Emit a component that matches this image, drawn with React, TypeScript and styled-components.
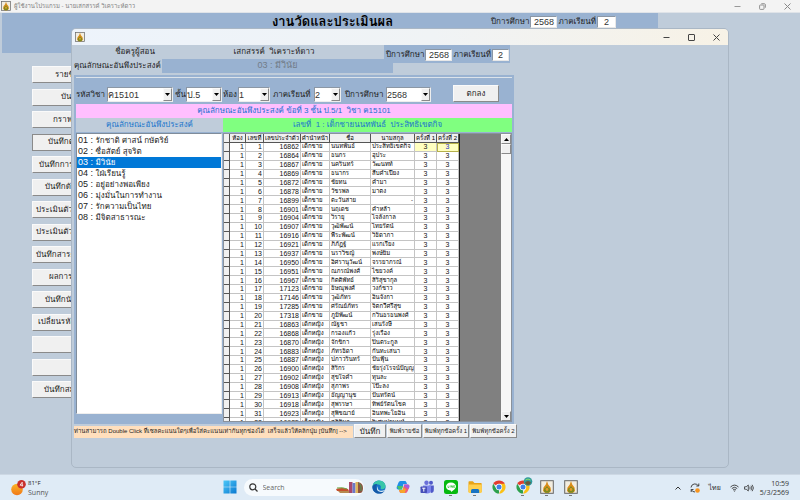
import React from "react";
import styled, { createGlobalStyle, css } from "styled-components";

const steel = "#99b2d1";
const mist = "#bfccda";
const face = "#f0f0f0";
const sans = '"Liberation Sans", Loma, Waree, Garuda, "Noto Sans Thai Looped", "Noto Sans Thai", "Noto Sans", sans-serif';

const GlobalStyle = createGlobalStyle`
  * { box-sizing: border-box; }
  html, body, #root { height: 100%; margin: 0; }
  body { font-family: ${sans}; font-size: 8px; color: #222; overflow: hidden; }
  button, input, select { font: inherit; color: inherit; border-radius: 0; margin: 0; }
`;

const Desktop = styled.div`
  height: 100%;
  display: flex;
  flex-direction: column;
`;

const MainWindow = styled.main`
  flex: 1;
  min-height: 0;
  position: relative;
  overflow: hidden;
  background: ${mist};
`;

const MainTitleBar = styled.header`
  display: flex;
  align-items: center;
  gap: 3px;
  height: 13px;
  padding: 0 9px 0 1px;
  background: #f3f3f3;
  border-bottom: 1px solid #dfe3e8;
  color: #808080;
  font-size: 6px;
  line-height: 12px;
`;

const WindowControls = styled.div<{ $gap: number }>`
  display: flex;
  align-items: center;
  gap: ${(p) => p.$gap}px;
  margin-left: auto;
`;

const ControlButton = styled.button`
  display: flex;
  padding: 0;
  border: 0;
  background: none;
`;

const Banner = styled.div`
  display: flex;
  align-items: flex-start;
  width: 82%;
  height: 40px;
  padding-right: 42px;
  margin-left: 2px;
  background: ${steel};
`;

const Heading = styled.h1`
  flex: 1;
  margin: 0;
  padding-left: 172px;
  text-align: center;
  color: #000;
  font-size: 13px;
  line-height: 18px;
  white-space: nowrap;
`;

const PeriodGroup = styled.div`
  display: flex;
  align-items: center;
  gap: 1px;
  padding-top: 2px;
`;

const FieldLabel = styled.label`
  white-space: nowrap;
  line-height: 14px;
`;

const SmallInput = styled.input<{ $w: number }>`
  width: ${(p) => p.$w}px;
  height: 12px;
  padding: 0;
  border: 1px solid #8b97a5;
  border-right-color: #e8e8e8;
  border-bottom-color: #e8e8e8;
  background: #fff;
  text-align: center;
  font-size: 9px;
  line-height: 10px;
  color: #333;
`;

const MenuColumn = styled.nav`
  display: flex;
  flex-direction: column;
  justify-content: space-between;
  width: 106px;
  height: 332px;
  margin: 13px 0 0 32px;
`;

const raised = css`
  border: 1px solid #fafafa;
  border-right-color: #8a8a8a;
  border-bottom-color: #8a8a8a;
  background: ${face};
`;

const MenuButton = styled.button<{ $indent: number; $active?: boolean }>`
  ${raised}
  height: 17px;
  padding: 0 0 0 ${(p) => p.$indent}px;
  text-align: left;
  line-height: 14px;
  white-space: nowrap;
  overflow: hidden;
  ${(p) => p.$active && "border-color: #8a8a8a;"}
`;

const Dialog = styled.section`
  position: absolute;
  inset: 28px 71px 6px;
  display: flex;
  flex-direction: column;
  overflow: hidden;
  border: 1px solid #aab7c5;
  border-radius: 5px;
  background: ${mist};
`;

const DialogTitleBar = styled.header`
  display: flex;
  align-items: center;
  flex: none;
  height: 16px;
  padding: 0 8px 0 3px;
  background: linear-gradient(90deg, #edf3fb 0%, #f0f3f5 55%, #f7f2e6 100%);
`;

const DialogBody = styled.div`
  display: flex;
  flex-direction: column;
  align-items: flex-start;
  padding-left: 2px;
`;

const InfoArea = styled.div`
  display: flex;
  align-items: flex-start;
  width: 436px;
  height: 30px;
`;

const InfoGrid = styled.dl`
  display: grid;
  grid-template-columns: 88px 222px;
  grid-template-rows: 14px 14px;
  margin: 0;
  text-align: center;
  white-space: nowrap;
  line-height: 13px;
`;

const Term = styled.dt<{ $inset?: number }>`
  padding-left: ${(p) => p.$inset ?? 0}px;
  text-align: ${(p) => (p.$inset ? "center" : "left")};
`;

const Detail = styled.dd<{ $filled?: boolean }>`
  margin: 0;
  padding-left: 2px;
  white-space: pre;
  ${(p) =>
    p.$filled &&
    css`
      padding-left: 0;
      margin-right: -9px;
      background: ${steel};
      color: #727c88;
      font-size: 9px;
    `}
`;

const PeriodPanel = styled.div`
  display: flex;
  align-items: center;
  justify-content: flex-end;
  gap: 1px;
  flex: 1;
  height: 18px;
  padding: 2px 1px 0 0;
  background: ${steel};
`;

const Frame = styled.div`
  width: 440px;
  padding: 0 2px;
  border-top: 2px solid ${steel};
  background: ${steel};
`;

const FilterBar = styled.form`
  display: flex;
  align-items: center;
  height: 27px;
  padding: 7px 0 0 0;
  border-top: 1px solid #dce3ea;
  line-height: 14px;
`;

const Filter = styled.label<{ $after: number }>`
  display: flex;
  align-items: center;
  gap: 1px;
  margin-right: ${(p) => p.$after}px;
  white-space: nowrap;
`;

const FilterName = styled.span<{ $w: number }>`
  width: ${(p) => p.$w}px;
`;

const SelectBox = styled.span<{ $w: number }>`
  display: flex;
  width: ${(p) => p.$w}px;
  height: 15px;
  border: 1px solid #8b97a5;
  border-right-color: #eee;
  border-bottom-color: #eee;
  background: #fff;
`;

const Select = styled.select`
  flex: 1;
  min-width: 0;
  padding: 0;
  border: 0;
  appearance: none;
  background: none;
  font-size: 9px;
  line-height: 12px;
  color: #333;
`;

const Arrow = styled.span`
  ${raised}
  display: flex;
  align-items: center;
  justify-content: center;
  width: 9px;
  pointer-events: none;
`;

const OkButton = styled.button`
  ${raised}
  width: 46px;
  height: 17px;
  margin-bottom: 3px;
  padding: 0;
  line-height: 13px;
`;

const PinkStrip = styled.div`
  height: 14px;
  background: #ffbfff;
  color: #2070d0;
  text-align: center;
  line-height: 13px;
  white-space: pre;
`;

const Columns = styled.div`
  display: grid;
  grid-template-columns: 147px 1fr;
`;

const ColumnTitle = styled.h2<{ $green?: boolean }>`
  height: 14px;
  margin: 0 0 1px;
  background: ${(p) => (p.$green ? "#80ff80" : mist)};
  color: #1a76cc;
  text-align: center;
  font-size: 8px;
  font-weight: 400;
  line-height: 13px;
  white-space: pre;
`;

const TraitList = styled.ul`
  height: 281px;
  margin: 0 1px 10px 0;
  padding: 1px 0;
  list-style: none;
  border: 1px solid #7f8c9a;
  border-right-color: #eee;
  border-bottom-color: #eee;
  background: #fff;
`;

const Trait = styled.li<{ $selected?: boolean }>`
  height: 11px;
  padding-left: 1px;
  line-height: 11px;
  white-space: pre;
  background: ${(p) => (p.$selected ? "#0078d7" : "transparent")};
  color: ${(p) => (p.$selected ? "#fff" : "#222")};
`;

const TraitCode = styled.span`
  font-size: 9px;
`;

const GridView = styled.div`
  display: flex;
  height: 289px;
  overflow: hidden;
  border: 1px solid #8a929c;
  background: #808080;
`;

const ScoreTable = styled.table`
  table-layout: fixed;
  width: 236px;
  height: 293px;
  border-collapse: separate;
  border-spacing: 0;
  border-right: 1px solid #222;
  background: #fff;
  font-size: 7px;
  line-height: 7px;
  color: #111;
`;

const HeadCell = styled.th`
  height: 9px;
  padding: 0;
  overflow: hidden;
  border-right: 1px solid #555;
  border-bottom: 1px solid #555;
  background: ${face};
  color: #000;
  font-size: 6px;
  font-weight: 400;
  white-space: nowrap;
`;

const Cell = styled.td<{ $align?: string; $mark?: boolean; $small?: boolean; $focus?: boolean }>`
  padding: 0 1px;
  overflow: hidden;
  border-right: 1px solid #c4c4c4;
  border-bottom: 1px solid #c4c4c4;
  text-align: ${(p) => p.$align ?? "left"};
  white-space: nowrap;
  ${(p) => p.$small && "font-size: 6px; color: #000;"}
  ${(p) => p.$mark && "background: #ffffc0;"}
  ${(p) => p.$focus && "outline: 1px solid #b5b04a; outline-offset: -1px; color: #2a35c8;"}
`;

const RowHead = styled.th`
  padding: 0;
  border-right: 1px solid #555;
  border-bottom: 1px solid #555;
  background: ${face};
`;

const ScrollTrack = styled.div`
  display: flex;
  flex-direction: column;
  width: 10px;
  margin-left: auto;
  background: #f7f7f7;
`;

const ScrollPart = styled.button<{ $end?: boolean }>`
  ${raised}
  display: flex;
  align-items: center;
  justify-content: center;
  height: 10px;
  padding: 0;
  ${(p) => p.$end && "margin-top: auto;"}
`;

const Footer = styled.footer`
  display: flex;
  align-items: flex-start;
  gap: 1px;
  white-space: nowrap;
`;

const Hint = styled.p`
  width: 279px;
  height: 12px;
  margin: 2px 0 0;
  background: #ffdfbd;
  font-size: 6px;
  line-height: 11px;
  white-space: pre;
`;

const FooterButton = styled.button<{ $w: number; $large?: boolean }>`
  ${raised}
  width: ${(p) => p.$w}px;
  height: 14px;
  padding: 0;
  font-size: ${(p) => (p.$large ? 8 : 6)}px;
  line-height: 11px;
`;

const Taskbar = styled.footer`
  display: grid;
  grid-template-columns: 1fr auto 1fr;
  align-items: center;
  height: 26px;
  background: #dfebf6;
  border-top: 1px solid #cdd8e4;
  color: #333;
  font-family: "Open Sans", ${sans};
  font-size: 7px;
  line-height: 9px;
`;

const Weather = styled.div`
  display: flex;
  align-items: center;
  gap: 2px;
  padding-left: 11px;
`;

const WeatherText = styled.div`
  color: #555;
`;

const Degrees = styled.div`
  color: #222;
  font-size: 6px;
`;

const AppRow = styled.div`
  display: flex;
  align-items: center;
  gap: 8px;
`;

const SearchBox = styled.label`
  display: flex;
  align-items: center;
  gap: 5px;
  width: 120px;
  height: 17px;
  margin: 0 -1px 0 -2px;
  padding: 0 1px 0 5px;
  border-radius: 9px;
  background: #f6fafd;
`;

const SearchInput = styled.input`
  flex: 1;
  min-width: 0;
  padding: 0;
  border: 0;
  outline: 0;
  background: none;
  font-size: 7px;
  &::placeholder { color: #666; opacity: 1; }
`;

const AppButton = styled.button<{ $running?: boolean }>`
  display: flex;
  flex-direction: column;
  align-items: center;
  gap: 1px;
  width: 16px;
  height: 19px;
  padding: 2px 0 0;
  border: 0;
  background: none;
  &::after {
    content: "";
    width: 3px;
    height: 1px;
    background: ${(p) => (p.$running ? "#777" : "transparent")};
  }
`;

const Tray = styled.div`
  display: flex;
  align-items: center;
  justify-content: flex-end;
  gap: 9px;
  padding-right: 11px;
`;

const Status = styled.div`
  display: flex;
  align-items: center;
  gap: 5px;
`;

const Clock = styled.div`
  margin-left: -3px;
  text-align: right;
`;

const Emblem = ({ size = 9 }: { size?: number }) => (
  <svg width={size} height={size} viewBox="0 0 14 14" aria-hidden="true">
    <rect x=".7" y=".7" width="12.6" height="12.6" fill="#f2ede0" stroke="#666" strokeWidth="1" />
    <path d="M7 1 8.2 4.5 10.5 7.500 11 11 9 12.800H5L3 11 3.500 7.500 5.800 4.500Z" fill="#d98c18" />
    <path d="M4 8.500 5.500 8 7 6 8.500 8 10 8.500 10 11.500 8.500 12.800h-3L4 11.500Z" fill="#7f8a1e" />
    <circle cx="7" cy="9.500" r="1.400" fill="#e39a2a" />
  </svg>
);

const Minimize = ({ c }: { c: string }) => (
  <svg width="7" height="7" viewBox="0 0 7 7"><path d="M.5 3.5h6" stroke={c} /></svg>
);
const Maximize = ({ c }: { c: string }) => (
  <svg width="7" height="7" viewBox="0 0 7 7"><rect x=".5" y=".5" width="6" height="6" rx=".5" fill="none" stroke={c} /></svg>
);
const Restore = ({ c }: { c: string }) => (
  <svg width="7" height="7" viewBox="0 0 7 7" fill="none" stroke={c} strokeWidth=".9">
    <rect x=".6" y="2" width="4.400" height="4.400" rx=".7" />
    <path d="M2.300.7H5.200q1.200 0 1.200 1.200v2.800" />
  </svg>
);
const Close = ({ c }: { c: string }) => (
  <svg width="7" height="7" viewBox="0 0 7 7"><path d="M.5.5 6.500 6.500M6.500.5.5 6.500" stroke={c} /></svg>
);
const Triangle = ({ up }: { up?: boolean }) => (
  <svg width="5" height="3" viewBox="0 0 5 3"><path d={up ? "M0 3 2.5 0 5 3Z" : "M0 0h5L2.5 3Z"} fill="#000" /></svg>
);

const EdgeIcon = () => (
  <svg width="14" height="14" viewBox="0 0 14 14">
    <circle cx="7" cy="7" r="6.6" fill="#1673c8" />
    <path d="M.5 6.5C1 2.5 4 .4 7 .4c4 0 6.6 3 6.6 5.6 0 2-1.4 3.2-3.2 3.2-1.4 0-2.1-.5-1.7-1.3.8-1.8-.8-3.3-3-3.3C3.500 4.600 1.500 5.400.5 6.500Z" fill="#39c6a8" />
    <path d="M.5 6.500C1.500 4 3.600 3.600 5.500 4.100 3.500 5.500 3.600 10 7 11.500c2 .8 4 .4 5.600-.8C11.300 12.800 9.200 13.700 7 13.600 3 13.500.2 10.500.5 6.500Z" fill="#1559a8" />
    <path d="M6.200 6.200C5 8 6 10.300 8.500 10.700c1.800.2 3.200-.2 4.600-1.200l-.5 1.200C11 12 9 12.300 7 11.500 4.500 10.300 4.400 7.500 6.200 6.200Z" fill="#dfebf6" />
  </svg>
);
const CopilotIcon = () => (
  <svg width="14" height="14" viewBox="0 0 14 14">
    <path d="M4.500 1h4.200c1 0 1.500.7 1.800 1.600L11 4H7.500L5.800 9.500H2.500C.8 9.500.3 8.300.8 6.700L2.300 3C2.800 1.700 3.400 1 4.500 1Z" fill="#1f8fe8" />
    <path d="M1 6 2.500 9.500h3.300L7 6Z" fill="#48c26b" />
    <path d="M9.500 13H5.300c-1 0-1.500-.7-1.800-1.600L3 10h3.500l1.700-5.500h3.300c1.700 0 2.200 1.200 1.700 2.800L11.700 11c-.5 1.300-1.100 2-2.200 2Z" fill="#ef5b7b" />
    <path d="M3 10h3.500l.8-2.600 2.700 2L8.700 13H5.300C4 13 3.400 11.400 3 10Z" fill="#f6a52b" />
    <path d="M8.200 4.500h3.300c1.700 0 2.200 1.200 1.700 2.800L12.500 9 8 6Z" fill="#a55be0" />
  </svg>
);
const TeamsIcon = () => (
  <svg width="14" height="14" viewBox="0 0 14 14">
    <circle cx="6.500" cy="2.800" r="2.200" fill="#6a70d8" />
    <circle cx="11" cy="2.800" r="2" fill="#5059c9" />
    <path d="M9 5.500h4.800V10q0 3-3 3Z" fill="#5059c9" />
    <path d="M3 5.600h8V10q0 3.500-4 3.500T3 10Z" fill="#7b83eb" />
    <rect x=".5" y="6.500" width="6.500" height="6.500" rx=".8" fill="#464eb8" />
    <path d="M2.200 8.200h3.200M3.800 8.200v3.400" stroke="#fff" />
  </svg>
);
const LineIcon = () => (
  <svg width="14" height="14" viewBox="0 0 14 14">
    <rect width="14" height="14" rx="2.500" fill="#06b90f" />
    <path d="M7 2.500c3 0 5 1.700 5 4 0 2.200-2.700 4-5 5.600 0-1 .2-1.500-.6-1.600C3.700 10.200 2 8.600 2 6.500c0-2.300 2-4 5-4Z" fill="#fff" />
    <path d="M4 5.500v2h1M6 5.500v2M7.200 7.500v-2l1.200 2v-2M10.700 5.500h-1v2h1M9.700 6.500h.9" fill="none" stroke="#06b90f" strokeWidth=".6" />
  </svg>
);
const FolderIcon = () => (
  <svg width="14" height="14" viewBox="0 0 14 14">
    <path d="M.5 2q0-.7.7-.7h3.600L6.500 3H13q.7 0 .7.700V12H.5Z" fill="#e8a317" />
    <path d="M.5 4.500h13.200v7.700q0 .8-.8.800H1.300q-.8 0-.8-.8Z" fill="#ffd04f" />
    <path d="M3 13v-2.500Q3 9 4.500 9h5.200q1.500 0 1.500 1.500V13Z" fill="#1773c4" />
  </svg>
);
const ChromeIcon = ({ badge }: { badge?: boolean }) => (
  <svg width="14" height="14" viewBox="0 0 14 14" overflow="visible">
    <path d="M7 7 1.300 3.700A6.600 6.600 0 0 1 12.700 3.700Z" fill="#e33b2e" />
    <path d="M7 7 7 13.600A6.600 6.600 0 0 1 1.300 3.700L4.200 8.600Z" fill="#2da04c" />
    <path d="M9.900 8.600 7 13.600A6.600 6.600 0 0 0 12.700 3.700H7Z" fill="#fbc116" />
    <circle cx="7" cy="7" r="3.200" fill="#fff" />
    <circle cx="7" cy="7" r="2.500" fill="#3f7fe8" />
    {badge && (
      <g>
        <circle cx="12" cy="1.500" r="4.300" fill="#2f9a9d" />
        <path d="M9 2.500q3-3 6 0-1 2.500-3 2.500T9 2.500Z" fill="#6b5a3a" />
        <path d="M9.500 0q2.500-2 5 0" stroke="#8be06a" fill="none" />
      </g>
    )}
  </svg>
);
const StartIcon = () => (
  <svg width="14" height="14" viewBox="0 0 14 14">
    <defs>
      <linearGradient id="pane" x2="1" y2="1"><stop stopColor="#4cc8f8" /><stop offset="1" stopColor="#0a78d0" /></linearGradient>
    </defs>
    <path d="M.5.5h6.200v6.200H.5ZM7.300.5h6.200v6.200H7.300ZM.5 7.300h6.200v6.200H.5ZM7.300 7.300h6.200v6.200H7.300Z" fill="url(#pane)" />
  </svg>
);
const BooksArt = () => (
  <svg width="27" height="13" viewBox="0 0 27 13">
    <path d="M0 8q6-2 12 0l1 2H1Z" fill="#c5502e" /><path d="M1 7q6-1 10 1" stroke="#69a843" fill="none" />
    <path d="M2 10h12v2H4Z" fill="#b58a50" />
    <rect x="13" y="1" width="3.500" height="11" fill="#a8496b" />
    <rect x="16.500" y="2" width="3" height="10" fill="#6c78c8" />
    <rect x="19.500" y="1" width="3" height="11" fill="#e0b45c" />
    <path d="M22 1q5 1 5 6t-3 5h-2Z" fill="#8d5442" /><path d="M23 2q3 2 2 8" stroke="#4d9355" fill="none" />
  </svg>
);
const SunIcon = () => (
  <svg width="15" height="16" viewBox="0 0 15 16">
    <defs><linearGradient id="sun" y2="1" x2="0"><stop stopColor="#fbb524" /><stop offset="1" stopColor="#f0781a" /></linearGradient></defs>
    <circle cx="6" cy="9.500" r="5.800" fill="url(#sun)" />
    <circle cx="10.500" cy="4.300" r="4.300" fill="#c9302b" />
    <path d="M11.200 6.500V2.200L9 5.200h3.200" fill="none" stroke="#fff" strokeWidth=".8" />
  </svg>
);

const menu: { text: string; indent: number; active?: boolean }[] = [
  { text: "รายชื่อ", indent: 22 },
  { text: "บันทึก", indent: 28 },
  { text: "กราฟ", indent: 20 },
  { text: "บันทึกต", indent: 15, active: true },
  { text: "บันทึกการ", indent: 6 },
  { text: "บันทึกดัช", indent: 12 },
  { text: "ประเมินตัว", indent: 3 },
  { text: "ประเมินตัว", indent: 3 },
  { text: "บันทึกสาระ", indent: 3 },
  { text: "ผลการ", indent: 16 },
  { text: "บันทึกนั", indent: 12 },
  { text: "เปลี่ยนรหัส", indent: 5 },
  { text: "", indent: 0 },
  { text: "", indent: 0 },
  { text: "บันทึกสม", indent: 11 },
];

const traits = [
  "รักชาติ ศาสน์ กษัตริย์",
  "ซื่อสัตย์ สุจริต",
  "มีวินัย",
  "ใฝ่เรียนรู้",
  "อยู่อย่างพอเพียง",
  "มุ่งมั่นในการทำงาน",
  "รักความเป็นไทย",
  "มีจิตสาธารณะ",
];

const students: [number, string, string][] = [
  [16862, "นนทพันธ์", "ประสิทธิเขตกิจ"],
  [16864, "ธนกร", "อุประ"],
  [16867, "นครินทร์", "วัฒนทท์"],
  [16869, "ธนากร", "สืบคำเปียง"],
  [16872, "ชัยทน", "คำมา"],
  [16878, "วัชรพล", "มาตง"],
  [16899, "ตะวันสาย", "-"],
  [16901, "นฤเดช", "คำหล้า"],
  [16904, "วิรายุ", "ไจลังกาล"],
  [16907, "วุฒิพัฒน์", "ไทยรัตน์"],
  [16916, "พีระพัฒน์", "วิธิดาภา"],
  [16921, "ภิภัฏฐ์", "แรกเรียง"],
  [16937, "นราวิชญ์", "พงษ์ยิ้ม"],
  [16950, "อิศรานุวัฒน์", "จรรยาภรณ์"],
  [16951, "ณภรณ์พงศ์", "ไชยวงค์"],
  [16967, "กิตติพัทธ์", "สิริสุชากุล"],
  [17123, "ธิษณุพงศ์", "วงก์ชาว"],
  [17146, "วุฒิภัทร", "อินจังกา"],
  [17285, "ศรัณย์ภัทร", "จิตกวีศรีสุข"],
  [17318, "ภูมิพัฒน์", "กวินธรธนพงศ์"],
  [16863, "ณัฐชา", "เสนรังษี"],
  [16868, "กรองแก้ว", "รุ่งเรือง"],
  [16870, "จักขิกา", "ปินตระกูล"],
  [16883, "ภัทรธิดา", "กันทะเสนา"],
  [16887, "ปภาวรินทร์", "ปันฟุ้น"],
  [16900, "สิริกร", "ชัยรุ่งโรจน์ปัญญ"],
  [16902, "สุขใจคำ", "ทุนละ"],
  [16908, "สุภาพร", "โป๊ะลง"],
  [16913, "ธัญญานุช", "ปันทรัตน์"],
  [16918, "สุพรรษา", "ทิพย์รัตนโชค"],
  [16923, "สุพิชฌาย์", "อินทพะโยอิน"],
  [16925, "สุภิสิมล", "วิเศษปานนท์"],
];

const columnWidths = [6, 16, 18, 37, 29, 41, 44, 22, 22];
const headers = ["", "ห้อง", "เลขที่", "เลขประจำตัว", "คำนำหน้า", "ชื่อ", "นามสกุล", "ครั้งที่ 1", "ครั้งที่ 2"];

const Dropdown = ({ id, value, width }: { id: string; value: string; width: number }) => (
  <SelectBox $w={width}>
    <Select id={id} defaultValue={value}>
      <option>{value}</option>
    </Select>
    <Arrow><Triangle /></Arrow>
  </SelectBox>
);

const ScoreGrid = () => (
  <GridView>
    <ScoreTable>
      <colgroup>
        {columnWidths.map((w, i) => <col key={i} width={w} />)}
      </colgroup>
      <thead>
        <tr>{headers.map((h, i) => <HeadCell key={i}>{h}</HeadCell>)}</tr>
      </thead>
      <tbody>
        {students.map(([code, first, last], i) => (
          <tr key={code}>
            <RowHead />
            <Cell $align="right">1</Cell>
            <Cell $align="right">{i + 1}</Cell>
            <Cell $align="right">{code}</Cell>
            <Cell $small>{i < 20 ? "เด็กชาย" : "เด็กหญิง"}</Cell>
            <Cell $small>{first}</Cell>
            <Cell $small $align={last === "-" ? "right" : "left"}>{last}</Cell>
            <Cell $align="center" $mark={i === 0}>3</Cell>
            <Cell $align="center" $mark={i === 0} $focus={i === 0}>3</Cell>
          </tr>
        ))}
      </tbody>
    </ScoreTable>
    <ScrollTrack>
      <ScrollPart aria-label="เลื่อนขึ้น"><Triangle up /></ScrollPart>
      <ScrollPart aria-label="แถบเลื่อน" />
      <ScrollPart $end aria-label="เลื่อนลง"><Triangle /></ScrollPart>
    </ScrollTrack>
  </GridView>
);

const EvaluationDialog = () => (
  <Dialog>
    <DialogTitleBar>
      <Emblem size={10} />
      <WindowControls $gap={18}>
        <ControlButton aria-label="ย่อ"><Minimize c="#444" /></ControlButton>
        <ControlButton aria-label="ขยาย"><Maximize c="#444" /></ControlButton>
        <ControlButton aria-label="ปิด"><Close c="#444" /></ControlButton>
      </WindowControls>
    </DialogTitleBar>
    <DialogBody>
      <InfoArea>
        <InfoGrid>
          <Term $inset={34}>ชื่อครูผู้สอน</Term>
          <Detail>เสกสรรค์  วิเคราะห์ดาว</Detail>
          <Term>คุณลักษณะอันพึงประสงค์</Term>
          <Detail $filled>03 : มีวินัย</Detail>
        </InfoGrid>
        <PeriodPanel>
          <FieldLabel htmlFor="year">ปีการศึกษา</FieldLabel>
          <SmallInput id="year" $w={27} defaultValue="2568" />
          <FieldLabel htmlFor="term">ภาคเรียนที่</FieldLabel>
          <SmallInput id="term" $w={17} defaultValue="2" />
        </PeriodPanel>
      </InfoArea>
      <Frame>
        <FilterBar onSubmit={(e) => e.preventDefault()}>
          <Filter $after={2}><FilterName $w={30}>รหัสวิชา</FilterName><Dropdown id="subject" value="ค15101" width={66} /></Filter>
          <Filter $after={1}><FilterName $w={10}>ชั้น</FilterName><Dropdown id="grade" value="ป.5" width={36} /></Filter>
          <Filter $after={3}><FilterName $w={14}>ห้อง</FilterName><Dropdown id="room" value="1" width={32} /></Filter>
          <Filter $after={4}><FilterName $w={40}>ภาคเรียนที่</FilterName><Dropdown id="semester" value="2" width={27} /></Filter>
          <Filter $after={22}><FilterName $w={40}>ปีการศึกษา</FilterName><Dropdown id="school-year" value="2568" width={45} /></Filter>
          <OkButton type="submit">ตกลง</OkButton>
        </FilterBar>
        <PinkStrip>คุณลักษณะอันพึงประสงค์ ข้อที่ 3 ชั้น ป.5/1  วิชา ค15101</PinkStrip>
        <Columns>
          <div>
            <ColumnTitle>คุณลักษณะอันพึงประสงค์</ColumnTitle>
            <TraitList>
              {traits.map((t, i) => (
                <Trait key={t} $selected={i === 2}><TraitCode>{`0${i + 1} : `}</TraitCode>{t}</Trait>
              ))}
            </TraitList>
          </div>
          <div>
            <ColumnTitle $green>เลขที่  1 : เด็กชายนนทพันธ์  ประสิทธิเขตกิจ</ColumnTitle>
            <ScoreGrid />
          </div>
        </Columns>
      </Frame>
      <Footer>
        <Hint>ท่านสามารถ Double Click ที่เซลคะแนนใดๆเพื่อใส่คะแนนเท่ากันทุกช่องได้  เสร็จแล้วให้คลิกปุ่ม [บันทึก] --&gt;</Hint>
        <FooterButton $w={32} $large>บันทึก</FooterButton>
        <FooterButton $w={35}>พิมพ์รายข้อ</FooterButton>
        <FooterButton $w={46}>พิมพ์ทุกข้อครั้ง 1</FooterButton>
        <FooterButton $w={47}>พิมพ์ทุกข้อครั้ง 2</FooterButton>
      </Footer>
    </DialogBody>
  </Dialog>
);

const SystemTaskbar = () => (
  <Taskbar>
    <Weather>
      <SunIcon />
      <WeatherText><Degrees>81°F</Degrees>Sunny</WeatherText>
    </Weather>
    <AppRow>
      <AppButton aria-label="Start"><StartIcon /></AppButton>
      <SearchBox>
        <svg width="9" height="9" viewBox="0 0 9 9" fill="none" stroke="#333" strokeWidth="1.200"><circle cx="3.800" cy="3.800" r="3" /><path d="m6 6 2.500 2.500" /></svg>
        <SearchInput aria-label="Search" placeholder="Search" />
        <BooksArt />
      </SearchBox>
      <AppButton aria-label="Edge"><EdgeIcon /></AppButton>
      <AppButton aria-label="Copilot"><CopilotIcon /></AppButton>
      <AppButton aria-label="Teams"><TeamsIcon /></AppButton>
      <AppButton aria-label="LINE" $running><LineIcon /></AppButton>
      <AppButton aria-label="Explorer" $running><FolderIcon /></AppButton>
      <AppButton aria-label="Chrome"><ChromeIcon /></AppButton>
      <AppButton aria-label="Chrome" $running><ChromeIcon badge /></AppButton>
      <AppButton aria-label="โปรแกรม" $running><Emblem size={14} /></AppButton>
      <AppButton aria-label="โปรแกรม" $running><Emblem size={14} /></AppButton>
    </AppRow>
    <Tray>
      <svg width="6" height="4" viewBox="0 0 6 4" fill="none" stroke="#333"><path d="M.5 3.500 3 1l2.500 2.500" /></svg>
      <svg width="10" height="10" viewBox="0 0 10 10" fill="none" stroke="#333" strokeWidth=".9">
        <path d="M1 4.500A4 4 0 0 1 8.500 3M8.800.5V3H6.300M1.200 9V6.500h2.300M1.300 6.700A4 4 0 0 0 5 9" />
        <circle cx="7.500" cy="7.500" r="2.300" fill="#f7941d" stroke="none" />
      </svg>
      <span>ไทย</span>
      <Status>
        <svg width="9" height="8" viewBox="0 0 9 8" fill="none" stroke="#333" strokeWidth=".9">
          <path d="M.5 3Q4.500-.8 8.500 3M1.800 4.500Q4.500 2 7.200 4.500M3 6q1.500-1.300 3 0" /><circle cx="4.500" cy="7" r=".6" fill="#333" stroke="none" />
        </svg>
        <svg width="10" height="8" viewBox="0 0 10 8" fill="none" stroke="#333" strokeWidth=".8">
          <path d="M.5 2.800h1.700L4.300 1v6L2.200 5.200H.5ZM5.700 2.700q1 1.300 0 2.600M7 1.700q1.800 2.300 0 4.600M8.200.8q2.500 3.200 0 6.400" />
        </svg>
      </Status>
      <Clock>10:59<br />5/3/2569</Clock>
    </Tray>
  </Taskbar>
);

export default function App() {
  return (
    <Desktop>
      <GlobalStyle />
      <MainWindow>
        <MainTitleBar>
          <Emblem size={10} />
          <span>ผู้ใช้งานโปรแกรม - นายเสกสรรค์ วิเคราะห์ดาว</span>
          <WindowControls $gap={18}>
            <ControlButton aria-label="ย่อ"><Minimize c="#999" /></ControlButton>
            <ControlButton aria-label="คืนค่า"><Restore c="#888" /></ControlButton>
            <ControlButton aria-label="ปิด"><Close c="#888" /></ControlButton>
          </WindowControls>
        </MainTitleBar>
        <Banner>
          <Heading>งานวัดและประเมินผล</Heading>
          <PeriodGroup>
            <FieldLabel htmlFor="main-year">ปีการศึกษา</FieldLabel>
            <SmallInput id="main-year" $w={27} defaultValue="2568" />
            <FieldLabel htmlFor="main-term">ภาคเรียนที่</FieldLabel>
            <SmallInput id="main-term" $w={19} defaultValue="2" />
          </PeriodGroup>
        </Banner>
        <MenuColumn>
          {menu.map((m, i) => (
            <MenuButton key={i} $indent={m.indent} $active={m.active}>{m.text}</MenuButton>
          ))}
        </MenuColumn>
        <EvaluationDialog />
      </MainWindow>
      <SystemTaskbar />
    </Desktop>
  );
}
